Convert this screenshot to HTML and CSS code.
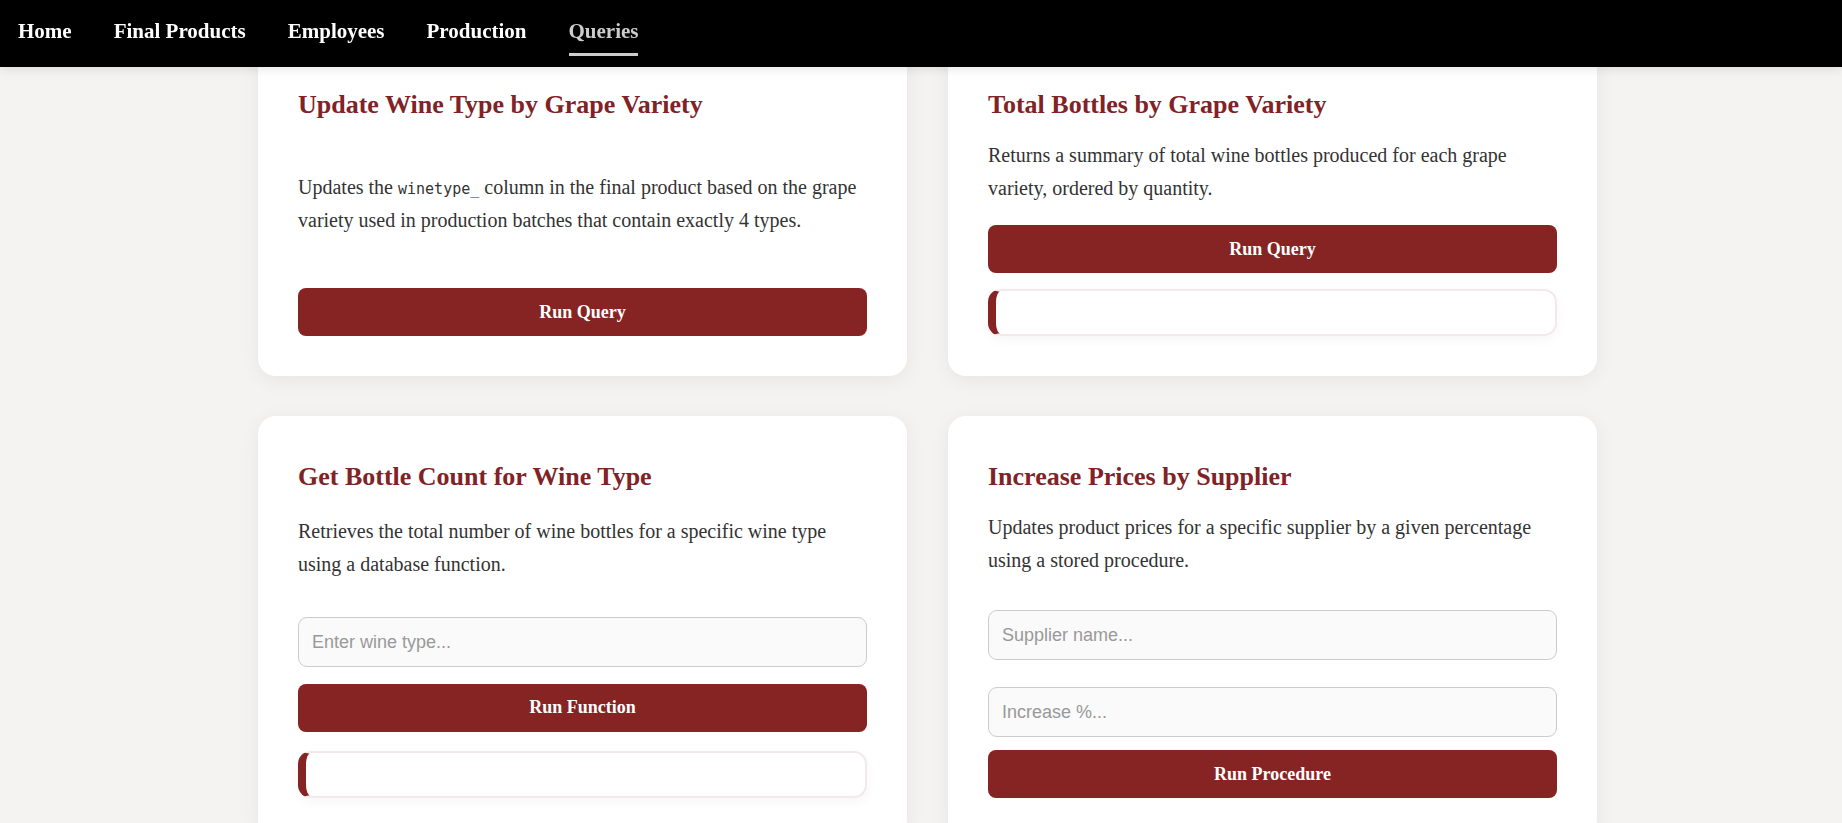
FILE: index.html
```html
<!DOCTYPE html>
<html lang="en">
<head>
  <meta charset="UTF-8">
  <meta name="viewport" content="width=device-width, initial-scale=1">
  <title>Queries</title>
  <link rel="stylesheet" href="styles.css">
</head>
<body>
  <nav class="navbar" aria-label="Main">
    <a class="nav-link" href="#home">Home</a>
    <a class="nav-link" href="#products">Final Products</a>
    <a class="nav-link" href="#employees">Employees</a>
    <a class="nav-link" href="#production">Production</a>
    <a class="nav-link active" href="#queries" aria-current="page">Queries</a>
  </nav>

  <main class="page">
    <div class="query-grid">
      <section class="card">
        <h2 class="card-title">Update Wine Type by Grape Variety</h2>
        <p class="card-text">Updates the <code class="code">winetype_</code> column in the final product based on the grape variety used in production batches that contain exactly 4 types.</p>
        <button class="run-button" type="button">Run Query</button>
      </section>

      <section class="card">
        <h2 class="card-title">Total Bottles by Grape Variety</h2>
        <p class="card-text">Returns a summary of total wine bottles produced for each grape variety, ordered by quantity.</p>
        <button class="run-button" type="button">Run Query</button>
        <div class="result"></div>
      </section>

      <section class="card">
        <h2 class="card-title">Get Bottle Count for Wine Type</h2>
        <p class="card-text">Retrieves the total number of wine bottles for a specific wine type using a database function.</p>
        <input class="field" type="text" placeholder="Enter wine type..." aria-label="Wine type">
        <button class="run-button" type="button">Run Function</button>
        <div class="result"></div>
      </section>

      <section class="card">
        <h2 class="card-title">Increase Prices by Supplier</h2>
        <p class="card-text">Updates product prices for a specific supplier by a given percentage using a stored procedure.</p>
        <input class="field" type="text" placeholder="Supplier name..." aria-label="Supplier name">
        <input class="field" type="text" placeholder="Increase %..." aria-label="Increase percentage">
        <button class="run-button" type="button">Run Procedure</button>
      </section>
    </div>
  </main>
</body>
</html>
```
FILE: styles.css
```css
* {
  box-sizing: border-box;
}

body {
  margin: 0;
  background: #f4f3f1;
  color: #333;
  font-family: "Liberation Serif", "Times New Roman", serif;
}

.navbar {
  position: fixed;
  top: 0;
  left: 0;
  right: 0;
  z-index: 10;
  display: flex;
  gap: 42px;
  padding: 11px 18px;
  background: #000;
  box-shadow: 0 2px 10px rgba(0, 0, 0, 0.1);
}

.nav-link {
  padding: 8px 0 10px;
  border-bottom: 3px solid transparent;
  color: #fff;
  font-size: 21px;
  font-weight: bold;
  line-height: 24px;
  text-decoration: none;
}

.nav-link.active {
  border-bottom-color: #ccc;
  color: #ccc;
}

.page {
  padding: 44px 0 40px 13px;
}

.query-grid {
  display: grid;
  grid-template-columns: 1fr 1fr;
  gap: 40px 41px;
  max-width: 1339px;
  margin: 0 auto;
}

.card {
  display: flex;
  flex-direction: column;
  justify-content: space-between;
  padding: 40px;
  border-radius: 18px;
  background: #fff;
  box-shadow: 0 4px 20px rgba(0, 0, 0, 0.06);
}

.card-title {
  margin: 0 0 14px;
  color: #7f2326;
  font-size: 26px;
  line-height: 41px;
}

.card-text {
  margin: 0 0 20px;
  font-size: 20px;
  line-height: 33px;
}

.code {
  font-family: "DejaVu Sans Mono", monospace;
  font-size: 15px;
  line-height: 1;
}

.field {
  width: 100%;
  height: 50px;
  margin: 13px 0;
  padding: 0 13px;
  border: 1px solid #ccc;
  border-radius: 9px;
  background: #fafafa;
  color: #333;
  font-family: "Liberation Sans", Arial, sans-serif;
  font-size: 18px;
}

.field + .field {
  margin-top: 14px;
}

.field::placeholder {
  color: #999;
}

.run-button {
  width: 100%;
  height: 48px;
  padding: 0;
  border: 0;
  border-radius: 8px;
  background: #862323;
  color: #fff;
  font-family: inherit;
  font-size: 18px;
  font-weight: bold;
  cursor: pointer;
}

.result {
  height: 47px;
  margin-top: 16px;
  border: 2px solid #f3e9ea;
  border-left: 8px solid #862323;
  border-radius: 13px;
  background: #fff;
  box-shadow: 0 4px 12px rgba(0, 0, 0, 0.04);
}
```
